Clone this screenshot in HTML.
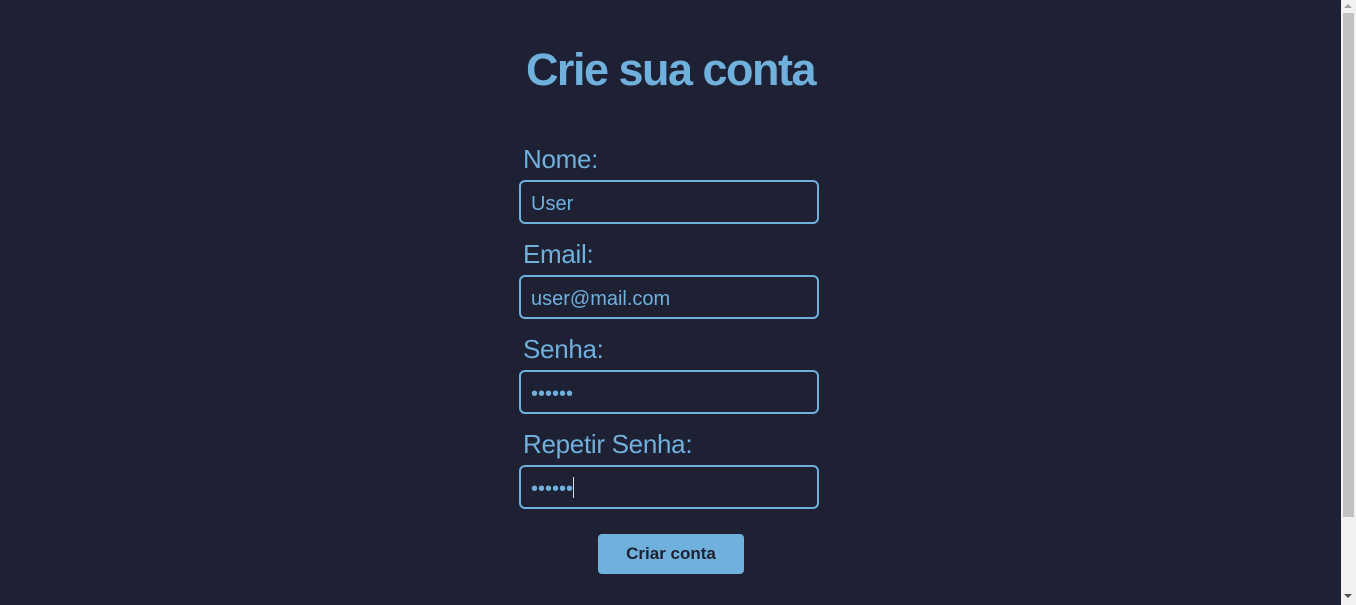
<!DOCTYPE html>
<html><head><meta charset="utf-8"><style>
html,body{margin:0;padding:0;}
body{width:1356px;height:605px;background:#1e2033;position:relative;overflow:hidden;font-family:"Liberation Sans",sans-serif;color:#6fb0dd;}
.sb{position:absolute;left:1341px;top:0;width:15px;height:605px;background:#f1f1f1;}
.thumb{position:absolute;left:1343px;top:13px;width:11px;height:504px;background:#c1c1c1;}
.up{position:absolute;left:1344px;top:4px;width:0;height:0;border-left:4px solid transparent;border-right:4px solid transparent;border-bottom:4px solid #a3a3a3;}
.dn{position:absolute;left:1344px;top:594px;width:0;height:0;border-left:4px solid transparent;border-right:4px solid transparent;border-top:4px solid #505050;}
h1{position:absolute;left:0;width:1341px;text-align:center;top:44px;margin:0;font-size:45px;font-weight:bold;letter-spacing:-1.5px;color:#6fb0dd;}
.lbl{position:absolute;left:523px;font-size:26px;letter-spacing:-0.3px;}
.in{position:absolute;left:519px;width:296px;height:40px;border:2px solid #6fb0dd;border-radius:6px;box-sizing:content-box;font-size:20px;line-height:40px;}
.in span{position:absolute;left:10px;top:2px;}
.btn{position:absolute;left:598px;top:534px;width:146px;height:40px;background:#6fb0dd;border-radius:4px;color:#1e2033;font-weight:bold;font-size:17px;text-align:center;line-height:40px;}
</style></head><body>
<h1>Crie sua conta</h1>
<div class="lbl" style="top:144px">Nome:</div>
<div class="in" style="top:180px"><span>User</span></div>
<div class="lbl" style="top:239px">Email:</div>
<div class="in" style="top:275px"><span>user@mail.com</span></div>
<div class="lbl" style="top:334px">Senha:</div>
<div class="in" style="top:370px"><span style="letter-spacing:0">••••••</span></div>
<div class="lbl" style="top:429px">Repetir Senha:</div>
<div class="in" style="top:465px"><span style="letter-spacing:0">••••••</span><div style="position:absolute;left:52px;top:10px;width:1px;height:21px;background:#ddd"></div></div>
<div class="btn">Criar conta</div>
<div class="sb"></div><div class="thumb"></div><div class="up"></div><div class="dn"></div>
</body></html>
